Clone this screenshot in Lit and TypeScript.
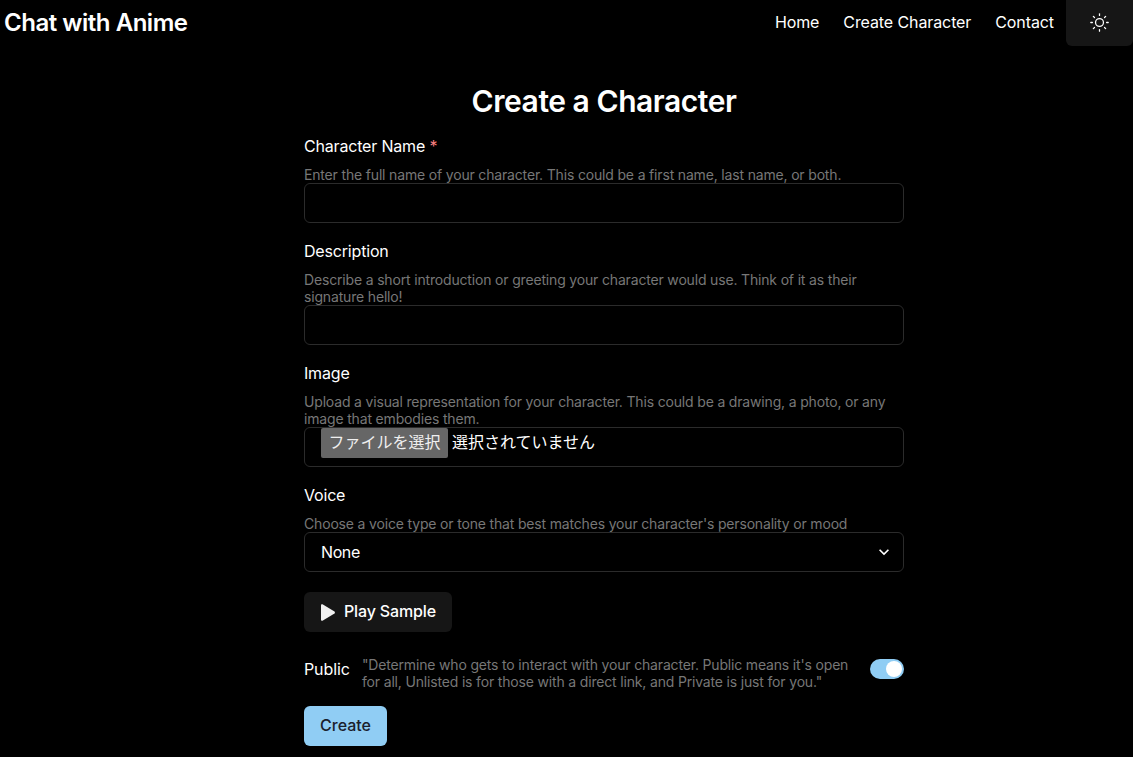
import { LitElement, html, css } from "lit";
import { customElement } from "lit/decorators.js";

@customElement("app-root")
export class AppRoot extends LitElement {
  static styles = css`
    :host {
      display: block;
      background: #000;
      color: #fff;
      height: 757px;
      overflow: hidden;
      font-family: Inter, "Noto Sans CJK JP", sans-serif;
      font-size: 16px;
    }
    .header {
      display: flex;
      justify-content: space-between;
      align-items: flex-start;
      height: 46px;
      padding-left: 4px;
    }
    .logo {
      font-size: 24px;
      font-weight: 600;
      line-height: 45px;
      letter-spacing: -0.47px;
    }
    .nav {
      display: flex;
      align-items: flex-start;
      gap: 24px;
    }
    .nav a {
      font-weight: 400;
      line-height: 44px;
      color: #fff;
      letter-spacing: -0.1px;
    }
    .theme {
      width: 67px;
      height: 46px;
      margin-left: -12px;
      background: #161616;
      border-radius: 0 0 6px 6px;
      display: flex;
      align-items: center;
      justify-content: center;
    }
    .theme svg {
      width: 19px;
      height: 19px;
      margin-top: -2px;
      margin-left: -1px;
    }
    .wrap {
      display: flex;
      padding-left: 75px;
      justify-content: center;
    }
    main {
      width: 600px;
      display: flex;
      flex-direction: column;
    }
    h1 {
      margin: 35px 0 0;
      font-size: 30px;
      line-height: 40px;
      font-weight: 600;
      text-align: center;
      letter-spacing: -0.45px;
    }
    .field {
      margin-top: 16px;
    }
    .field.first {
      margin-top: 13px;
    }
    .label {
      font-weight: 400;
      line-height: 24px;
      margin-bottom: 8px;
      letter-spacing: -0.18px;
    }
    .req {
      color: #fc8181;
    }
    .help {
      font-size: 14px;
      line-height: 17px;
      color: #777;
      letter-spacing: -0.17px;
    }
    .control {
      height: 40px;
      box-sizing: border-box;
      border: 1px solid #2b2b2b;
      border-radius: 6px;
    }
    .file {
      display: flex;
      align-items: flex-start;
      padding-left: 16px;
      font-family: "Noto Sans CJK JP", sans-serif;
      color: #fff;
    }
    .file-btn {
      background: #666;
      border-radius: 2px;
      height: 30px;
      width: 127px;
      text-align: center;
      line-height: 27px;
      margin-right: 4px;
      white-space: nowrap;
      color: #efefef;
    }
    .file-name {
      line-height: 27px;
      white-space: nowrap;
    }
    .select {
      display: flex;
      align-items: center;
      justify-content: space-between;
      padding: 0 9px 0 16px;
    }
    .select span {
      letter-spacing: -0.4px;
    }
    .select svg {
      width: 20px;
      height: 20px;
      display: block;
    }
    .play {
      display: inline-flex;
      align-items: center;
      gap: 9px;
      height: 40px;
      width: 148px;
      box-sizing: border-box;
      padding-left: 17px;
      margin-top: 20px;
      background: #161616;
      border-radius: 6px;
      font-weight: 500;
      letter-spacing: -0.15px;
    }
    .play span {
      margin-bottom: 2px;
    }
    .play svg {
      width: 14px;
      height: 17px;
      display: block;
    }
    .public {
      display: flex;
      align-items: flex-start;
      margin-top: 24px;
    }
    .public .name {
      font-weight: 400;
      line-height: 24px;
      width: 58px;
      flex: none;
      margin-top: 1px;
      letter-spacing: -0.1px;
    }
    .public .help {
      flex: 1;
      padding-right: 12px;
    }
    .switch {
      flex: none;
      width: 34px;
      height: 20px;
      box-sizing: border-box;
      padding: 2px 2px 2px 16px;
      background: #90cdf4;
      border-radius: 10px;
      margin-top: 3px;
    }
    .thumb {
      width: 16px;
      height: 16px;
      background: #fff;
      border-radius: 50%;
    }
    .create {
      margin-top: 16px;
      width: 83px;
      height: 40px;
      background: #90cdf4;
      color: #1a202c;
      border-radius: 6px;
      font-weight: 500;
      line-height: 39px;
      text-align: center;
    }
  `;

  render() {
    return html`
      <div class="header">
        <div class="logo">Chat with Anime</div>
        <nav class="nav">
          <a>Home</a>
          <a>Create Character</a>
          <a>Contact</a>
          <div class="theme">
            <svg viewBox="0 0 24 24" fill="none" stroke="currentColor" stroke-width="1.6" stroke-linecap="round" stroke-linejoin="round">
              <circle cx="12" cy="12" r="5"></circle>
              <path d="M12 1v2"></path>
              <path d="M12 21v2"></path>
              <path d="M4.22 4.22l1.42 1.42"></path>
              <path d="M18.36 18.36l1.42 1.42"></path>
              <path d="M1 12h2"></path>
              <path d="M21 12h2"></path>
              <path d="M4.22 19.78l1.42-1.42"></path>
              <path d="M18.36 5.64l1.42-1.42"></path>
            </svg>
          </div>
        </nav>
      </div>
      <div class="wrap">
        <main>
          <h1>Create a Character</h1>
          <div class="field first">
            <div class="label">Character Name <span class="req">*</span></div>
            <div class="help">Enter the full name of your character. This could be a first name, last name, or both.</div>
            <div class="control"></div>
          </div>
          <div class="field">
            <div class="label">Description</div>
            <div class="help">Describe a short introduction or greeting your character would use. Think of it as their signature hello!</div>
            <div class="control"></div>
          </div>
          <div class="field">
            <div class="label">Image</div>
            <div class="help">Upload a visual representation for your character. This could be a drawing, a photo, or any image that embodies them.</div>
            <div class="control file">
              <span class="file-btn">ファイルを選択</span>
              <span class="file-name">選択されていません</span>
            </div>
          </div>
          <div class="field">
            <div class="label">Voice</div>
            <div class="help">Choose a voice type or tone that best matches your character's personality or mood</div>
            <div class="control select">
              <span>None</span>
              <svg viewBox="0 0 24 24" fill="currentColor"><path d="M16.59 8.59L12 13.17 7.41 8.59 6 10l6 6 6-6z"></path></svg>
            </div>
          </div>
          <div>
            <div class="play">
              <svg viewBox="0 0 14 17" fill="#f0f0f0"><path d="M0 1.2C0 .4.8-.1 1.5.3l12 7.2c.6.4.6 1.6 0 2l-12 7.2C.8 17.1 0 16.6 0 15.8z"></path></svg>
              <span>Play Sample</span>
            </div>
          </div>
          <div class="public">
            <span class="name">Public</span>
            <div class="help">"Determine who gets to interact with your character. Public means it's open for all, Unlisted is for those with a direct link, and Private is just for you."</div>
            <div class="switch"><div class="thumb"></div></div>
          </div>
          <div class="create">Create</div>
        </main>
      </div>
    `;
  }
}
